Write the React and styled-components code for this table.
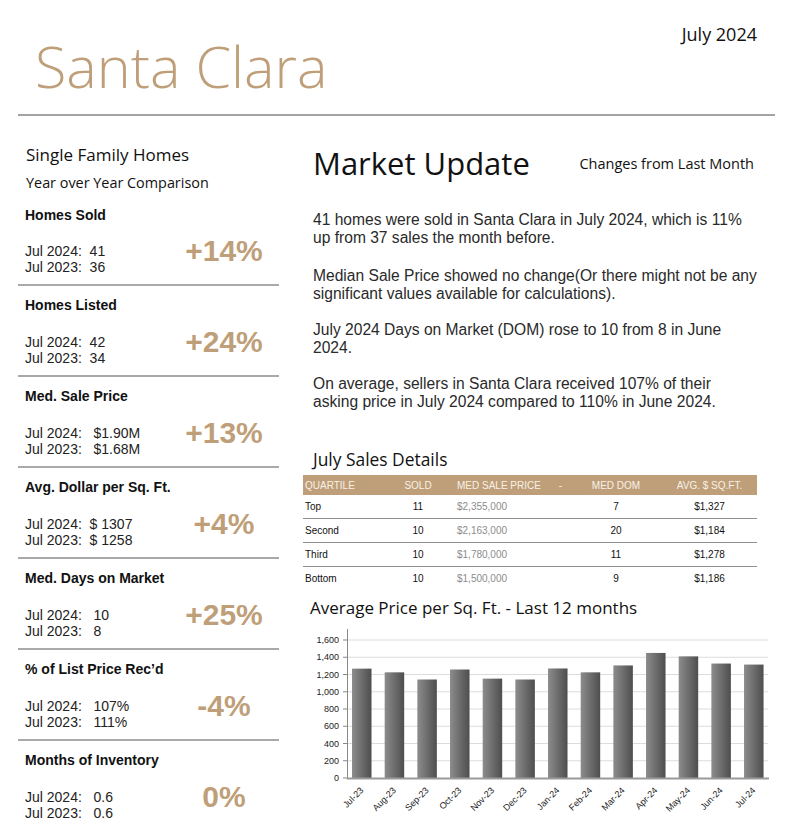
import React from 'react'
import styled, { createGlobalStyle } from 'styled-components'

const gold = '#bf9f79'
const narrow = '"Open Sans", "DejaVu Sans", "Liberation Sans", sans-serif'
const arial = '"Liberation Sans", Arial, sans-serif'

const GlobalStyle = createGlobalStyle`
  body {
    margin: 0;
    background: #fff;
    font-family: ${arial};
    color: #222;
  }
`

const Page = styled.div`
  width: 795px;
  height: 840px;
  overflow: hidden;
  box-sizing: border-box;
`

const Header = styled.header`
  position: relative;
  height: 114px;
  border-bottom: 2px solid #a3a3a3;
  margin: 0 20px 0 18px;
`

const DateLine = styled.div`
  position: absolute;
  right: 18px;
  top: 22px;
  font-family: ${narrow};
  font-size: 18px;
  color: #111;
`

const Title = styled.h1`
  margin: 0;
  padding: 36px 0 0 17px;
  font-family: ${narrow};
  font-weight: 300;
  font-size: 57.5px;
  line-height: 60px;
  color: ${gold};
`

const Body = styled.div`
  display: flex;
  padding-left: 18px;
`

const LeftCol = styled.aside`
  width: 261px;
  flex: none;
`

const Kind = styled.div`
  padding: 28px 0 0 8px;
  font-family: ${narrow};
  font-size: 17px;
  line-height: 22px;
  color: #111;
`

const Compare = styled.div`
  padding: 7px 0 0 8px;
  font-family: ${narrow};
  font-size: 14.4px;
  line-height: 20px;
  color: #111;
`

const Stat = styled.section`
  padding: ${p => (p.$first ? '14px' : '11px')} 0 9px 7px;
  border-bottom: ${p => (p.$last ? 'none' : '2px solid #a9a9a9')};
`

const StatName = styled.h3`
  margin: 0;
  font-size: 14px;
  line-height: 16px;
  font-weight: bold;
  color: #111;
`

const StatRow = styled.div`
  display: flex;
  align-items: flex-start;
  margin-top: ${p => (p.$tight ? 20 : 21)}px;
`

const Values = styled.div`
  width: 155px;
  font-size: 14px;
  line-height: 16px;
  white-space: pre;
  color: #222;
`

const Change = styled.div`
  width: 88px;
  margin-top: -7px;
  text-align: center;
  font-size: 30px;
  line-height: 30px;
  font-weight: bold;
  color: ${gold};
`

const RightCol = styled.main`
  flex: 1;
  margin-left: 24px;
  padding-right: 30px;
`

const UpdateHead = styled.div`
  display: flex;
  align-items: center;
  justify-content: space-between;
  padding: 27px 19px 0 10px;
`

const UpdateTitle = styled.h2`
  margin: 0;
  font-family: ${narrow};
  font-weight: normal;
  font-size: 31px;
  line-height: 40px;
  color: #111;
`

const UpdateNote = styled.div`
  font-family: ${narrow};
  font-size: 14.5px;
  color: #111;
`

const Summary = styled.div`
  padding: 28px 0 0 10px;
  font-size: 15.6px;
  line-height: 18px;
  color: #2a2a2a;

  p {
    margin: 0 0 18px;
  }
  p:first-child {
    margin-bottom: 20px;
  }
  p:last-child {
    margin-bottom: 0;
  }
`

const SubTitle = styled.h4`
  margin: ${p => p.$gap || 0}px 0 0;
  padding-left: ${p => p.$indent || 10}px;
  font-family: ${narrow};
  font-weight: normal;
  font-size: ${p => p.$size || 17.4}px;
  line-height: 22px;
  color: #111;
`

const Table = styled.div`
  margin-top: 5px;
  width: 454px;
  font-size: 10px;
`

const Row = styled.div`
  display: grid;
  grid-template-columns: 92px 46px 110px 19px 92px 95px;
  align-items: center;
  height: ${p => (p.$head ? '20px' : '23px')};
  background: ${p => (p.$head ? gold : 'transparent')};
  color: ${p => (p.$head ? '#f7f1e8' : '#111')};
  border-bottom: ${p => (p.$head || p.$last ? 'none' : '1px solid #8f8f8f')};
`

const Cell = styled.div`
  text-align: ${p => p.$align || 'center'};
  padding-left: ${p => p.$pad || 0}px;
  color: ${p => (p.$muted ? '#8c8c8c' : 'inherit')};
`

const ChartWrap = styled.div`
  margin-top: 7px;
`

const Chart = styled.svg`
  display: block;
  margin-top: 2px;
`

const stats = [
  { name: 'Homes Sold', a: '41', b: '36', gap: '  ', change: '+14%' },
  { name: 'Homes Listed', a: '42', b: '34', gap: '  ', change: '+24%' },
  { name: 'Med. Sale Price', a: '$1.90M', b: '$1.68M', gap: '   ', change: '+13%' },
  { name: 'Avg. Dollar per Sq. Ft.', a: '$ 1307', b: '$ 1258', gap: '  ', change: '+4%' },
  { name: 'Med. Days on Market', a: '10', b: '8', gap: '   ', change: '+25%' },
  { name: '% of List Price Rec\u2019d', a: '107%', b: '111%', gap: '   ', change: '-4%' },
  { name: 'Months of Inventory', a: '0.6', b: '0.6', gap: '   ', change: '0%' },
]

const quartiles = [
  ['Top', '11', '$2,355,000', '7', '$1,327'],
  ['Second', '10', '$2,163,000', '20', '$1,184'],
  ['Third', '10', '$1,780,000', '11', '$1,278'],
  ['Bottom', '10', '$1,500,000', '9', '$1,186'],
]

const months = [
  ['Jul-23', 1268], ['Aug-23', 1225], ['Sep-23', 1142], ['Oct-23', 1258],
  ['Nov-23', 1152], ['Dec-23', 1142], ['Jan-24', 1270], ['Feb-24', 1225],
  ['Mar-24', 1305], ['Apr-24', 1450], ['May-24', 1410], ['Jun-24', 1327],
  ['Jul-24', 1315],
]

const BASE = 157
const SCALE = 138 / 1600

function PriceChart() {
  const ticks = [0, 200, 400, 600, 800, 1000, 1200, 1400, 1600]
  return (
    <Chart width="470" height="205" viewBox="0 0 470 205">
      <defs>
        <linearGradient id="bar" x1="0" x2="1" y1="0" y2="0">
          <stop offset="0" stopColor="#8c8c8c" />
          <stop offset="1" stopColor="#4e4e4e" />
        </linearGradient>
      </defs>
      {ticks.map(t => {
        const y = BASE - t * SCALE
        return (
          <g key={t}>
            {t > 0 && <line x1="44" x2="465" y1={y} y2={y} stroke="#dcdcdc" />}
            <line x1="40" x2="44" y1={y} y2={y} stroke="#888" />
            <text x="36" y={y + 3} fontSize="9" textAnchor="end" fill="#222" fontFamily="Liberation Sans, Arial, sans-serif">
              {t.toLocaleString('en-US')}
            </text>
          </g>
        )
      })}
      <line x1="44.5" x2="44.5" y1="8" y2={BASE} stroke="#888" />
      {months.map(([m, v], i) => {
        const x = 49 + i * 32.67
        const h = v * SCALE
        const ax = x + 12
        return (
          <g key={m}>
            <rect x={x} y={BASE - h} width="19.5" height={h} fill="url(#bar)" />
            <text
              x={ax}
              y={170}
              fontSize="9"
              textAnchor="end"
              fill="#222"
              fontFamily="Liberation Sans, Arial, sans-serif"
              transform={`rotate(-45 ${ax} 170)`}
            >
              {m}
            </text>
          </g>
        )
      })}
      <line x1="44" x2="466" y1={BASE + 0.5} y2={BASE + 0.5} stroke="#9a9a9a" strokeWidth="2" />
    </Chart>
  )
}

export default function App() {
  return (
    <Page>
      <GlobalStyle />
      <Header>
        <DateLine>July 2024</DateLine>
        <Title>Santa Clara</Title>
      </Header>
      <Body>
        <LeftCol>
          <Kind>Single Family Homes</Kind>
          <Compare>Year over Year Comparison</Compare>
          {stats.map((s, i) => (
            <Stat key={s.name} $first={i === 0} $last={i === stats.length - 1}>
              <StatName>{s.name}</StatName>
              <StatRow $tight={i === 0}>
                <Values>
                  {`Jul 2024:${s.gap}${s.a}`}
                  <br />
                  {`Jul 2023:${s.gap}${s.b}`}
                </Values>
                <Change>{s.change}</Change>
              </StatRow>
            </Stat>
          ))}
        </LeftCol>
        <RightCol>
          <UpdateHead>
            <UpdateTitle>Market Update</UpdateTitle>
            <UpdateNote>Changes from Last Month</UpdateNote>
          </UpdateHead>
          <Summary>
            <p>41 homes were sold in Santa Clara in July 2024, which is 11%<br />up from 37 sales the month before.</p>
            <p>Median Sale Price showed no change(Or there might not be any<br />significant values available for calculations).</p>
            <p>July 2024 Days on Market (DOM) rose to 10 from 8 in June<br />2024.</p>
            <p>On average, sellers in Santa Clara received 107% of their<br />asking price in July 2024 compared to 110% in June 2024.</p>
          </Summary>
          <SubTitle $gap={37}>July Sales Details</SubTitle>
          <Table>
            <Row $head>
              <Cell $align="left" $pad={2}>QUARTILE</Cell>
              <Cell>SOLD</Cell>
              <Cell $align="left" $pad={16}>MED SALE PRICE</Cell>
              <Cell>-</Cell>
              <Cell>MED DOM</Cell>
              <Cell>AVG. $ SQ.FT.</Cell>
            </Row>
            {quartiles.map((q, i) => (
              <Row key={q[0]} $last={i === quartiles.length - 1}>
                <Cell $align="left" $pad={2}>{q[0]}</Cell>
                <Cell>{q[1]}</Cell>
                <Cell $align="left" $pad={16} $muted>{q[2]}</Cell>
                <Cell />
                <Cell>{q[3]}</Cell>
                <Cell>{q[4]}</Cell>
              </Row>
            ))}
          </Table>
          <ChartWrap>
            <SubTitle $indent={7} $size={17}>Average Price per Sq. Ft. - Last 12 months</SubTitle>
            <PriceChart />
          </ChartWrap>
        </RightCol>
      </Body>
    </Page>
  )
}
